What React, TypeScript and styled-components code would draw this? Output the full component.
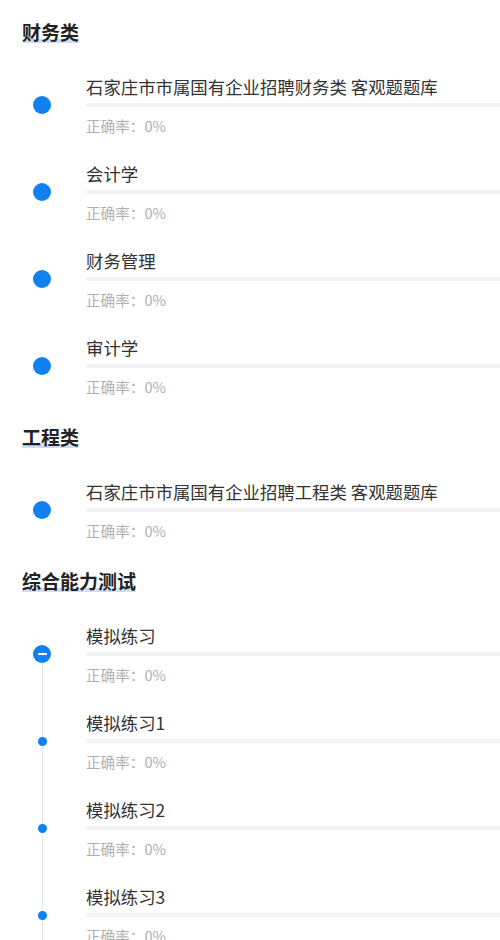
import React from "react";
import styled, { createGlobalStyle } from "styled-components";

const Global = createGlobalStyle`
  html, body { margin: 0; padding: 0; background: #fff; }
  body { font-family: "Noto Sans CJK SC", "Noto Sans", sans-serif; }
`;

const Page = styled.div`
  width: 500px;
  padding: 20px 0 0 22px;
  box-sizing: border-box;
  overflow: hidden;
`;

const Section = styled.section`
  display: flex;
  flex-direction: column;
  & + & { margin-top: 2px; }
`;

const TitleRow = styled.div`
  height: 24px;
  margin-bottom: 31px;
  display: flex;
  align-items: center;
`;

const Title = styled.h2`
  margin: 0;
  font-size: 19px;
  line-height: 22px;
  font-weight: 700;
  color: #222;
  background: linear-gradient(to top, rgba(190, 214, 245, 0.8) 4px, transparent 4px);
`;

const Item = styled.div`
  display: grid;
  grid-template-columns: 64px 1fr;
  height: 87px;
`;

const DotCol = styled.div`
  display: flex;
  flex-direction: column;
  align-items: center;
  width: 40px;
`;

const Line = styled.div<{ $hidden?: boolean; $h?: number; $grow?: boolean }>`
  width: 1px;
  background: ${(p) => (p.$hidden ? "transparent" : "#dfe6ee")};
  height: ${(p) => (p.$h !== undefined ? `${p.$h}px` : "auto")};
  flex: ${(p) => (p.$grow ? 1 : "none")};
`;

const Dot = styled.div<{ $size: number }>`
  width: ${(p) => p.$size}px;
  height: ${(p) => p.$size}px;
  border-radius: 50%;
  background: #1180f0;
  flex: none;
  display: flex;
  align-items: center;
  justify-content: center;
`;

const Minus = styled.span`
  width: 9px;
  height: 2px;
  background: #fff;
  border-radius: 1px;
`;

const Content = styled.div`
  display: flex;
  flex-direction: column;
  min-width: 0;
`;

const Name = styled.div`
  font-size: 17.4px;
  line-height: 24px;
  color: #333;
  white-space: nowrap;
`;

const Bar = styled.div`
  margin-top: 4px;
  height: 4px;
  background: #f3f3f3;
  border-radius: 2px 0 0 2px;
`;

const Rate = styled.div`
  margin-top: 9px;
  font-size: 14.6px;
  line-height: 20px;
  color: #b0b0b0;
`;

type Entry = { name: string };
type Group = { title: string; timeline?: boolean; items: Entry[] };

const groups: Group[] = [
  {
    title: "财务类",
    items: [
      { name: "石家庄市市属国有企业招聘财务类 客观题题库" },
      { name: "会计学" },
      { name: "财务管理" },
      { name: "审计学" },
    ],
  },
  {
    title: "工程类",
    items: [{ name: "石家庄市市属国有企业招聘工程类 客观题题库" }],
  },
  {
    title: "综合能力测试",
    timeline: true,
    items: [
      { name: "模拟练习" },
      { name: "模拟练习1" },
      { name: "模拟练习2" },
      { name: "模拟练习3" },
    ],
  },
];

const CENTER = 30;

function Marker({ timeline, first }: { timeline?: boolean; first: boolean }) {
  if (!timeline) {
    return (
      <DotCol>
        <Line $hidden $h={CENTER - 9} />
        <Dot $size={18} />
      </DotCol>
    );
  }
  if (first) {
    return (
      <DotCol>
        <Line $hidden $h={CENTER - 9} />
        <Dot $size={18}>
          <Minus />
        </Dot>
        <Line $grow />
      </DotCol>
    );
  }
  return (
    <DotCol>
      <Line $h={CENTER - 4.5} />
      <Dot $size={9} />
      <Line $grow />
    </DotCol>
  );
}

export default function App() {
  return (
    <Page>
      <Global />
      {groups.map((g) => (
        <Section key={g.title}>
          <TitleRow>
            <Title>{g.title}</Title>
          </TitleRow>
          {g.items.map((it, i) => (
            <Item key={it.name}>
              <Marker timeline={g.timeline} first={i === 0} />
              <Content>
                <Name>{it.name}</Name>
                <Bar />
                <Rate>正确率：0%</Rate>
              </Content>
            </Item>
          ))}
        </Section>
      ))}
    </Page>
  );
}
